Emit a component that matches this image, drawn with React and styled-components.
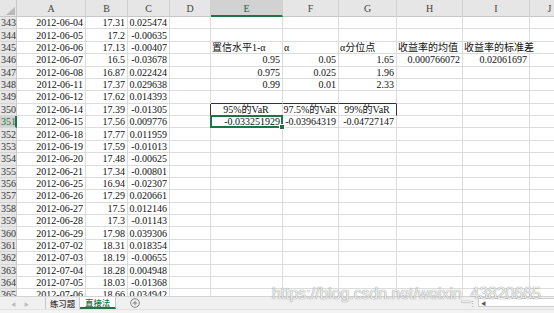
import React from "react";
import styled, { createGlobalStyle, css } from "styled-components";

const GREEN = "#217346";

const GlobalStyle = createGlobalStyle`
  html, body { margin: 0; padding: 0; background: #fff; }
  body { font-family: "Liberation Serif", "Noto Sans CJK SC", serif; }
`;

const Root = styled.div`
  position: relative;
  width: 554px;
  height: 313px;
  overflow: hidden;
  display: flex;
  flex-direction: column;
  background: #fff;
`;

const SheetArea = styled.div`
  flex: none;
  height: 296px;
  overflow: hidden;
`;

const Grid = styled.div`
  display: grid;
  grid-template-columns: 17px 69px 42px 42px 41px 72px 56px 58px 66px 67px 40px;
  grid-template-rows: 17px;
  grid-auto-rows: 12.38px;
  width: 570px;
`;

const Corner = styled.div`
  background: #e6e6e6;
  border-right: 1px solid #c8c8c8;
  border-bottom: 1px solid #c8c8c8;
  display: flex;
  align-items: flex-end;
  justify-content: flex-end;
  padding: 0 1px 1px 0;
  box-sizing: border-box;
`;

const ColHead = styled.div`
  box-sizing: border-box;
  background: ${(p) => (p.$sel ? "#d2d2d2" : "#e6e6e6")};
  border-right: 1px solid #cfcfcf;
  border-bottom: ${(p) => (p.$sel ? `2px solid ${GREEN}` : "1px solid #c8c8c8")};
  color: ${(p) => (p.$sel ? "#2b5d3f" : "#444")};
  font-size: 10px;
  display: flex;
  align-items: center;
  justify-content: center;
  padding-top: ${(p) => (p.$sel ? "1px" : "0")};
`;

const RowHead = styled.div`
  box-sizing: border-box;
  background: ${(p) => (p.$sel ? "#d2d2d2" : "#e6e6e6")};
  border-right: ${(p) => (p.$sel ? `2px solid ${GREEN}` : "1px solid #c8c8c8")};
  border-bottom: 1px solid #d6d6d6;
  color: ${(p) => (p.$sel ? GREEN : "#333")};
  font-size: 10px;
  line-height: 11px;
  display: flex;
  align-items: center;
  justify-content: flex-start;
  padding-left: 1px;
`;

const justify = { left: "flex-start", right: "flex-end", center: "center" };

const Cell = styled.div`
  position: relative;
  box-sizing: border-box;
  border-right: 1px solid ${(p) => (p.$dr ? "#333" : "#dcdcdc")};
  border-bottom: 1px solid ${(p) => (p.$db ? "#333" : "#dcdcdc")};
  color: #111;
  font-size: 10px;
  line-height: 11px;
  white-space: nowrap;
  display: flex;
  align-items: center;
  justify-content: ${(p) => justify[p.$align || "right"]};
  padding: 0 2px 0 1px;
  ${(p) =>
    p.$selected &&
    css`
      z-index: 2;
      &::after {
        content: "";
        position: absolute;
        left: -1px;
        top: -1px;
        right: -1px;
        bottom: -1px;
        border: 2px solid ${GREEN};
        pointer-events: none;
      }
      &::before {
        content: "";
        position: absolute;
        right: -3px;
        bottom: -3px;
        width: 4px;
        height: 4px;
        background: ${GREEN};
        border: 1px solid #fff;
        z-index: 3;
      }
    `}
`;

const TabBar = styled.div`
  flex: none;
  height: 13px;
  box-sizing: border-box;
  background: #f0f0f0;
  border-top: 1px solid #d4d4d4;
  display: flex;
  align-items: stretch;
  font-family: "Noto Sans CJK SC", "Liberation Sans", sans-serif;
`;

const NavArrows = styled.div`
  width: 46px;
  display: flex;
  align-items: center;
  gap: 8px;
  padding-left: 11px;
  box-sizing: border-box;
  color: #bdbdbd;
  font-size: 5px;
  line-height: 5px;
  border-right: 1px solid #c8c8c8;
`;

const Tab = styled.div`
  display: flex;
  align-items: center;
  justify-content: center;
  padding: 0 4px;
  font-size: 8.4px;
  line-height: 9px;
  box-sizing: border-box;
  color: ${(p) => (p.$active ? GREEN : "#333")};
  background: ${(p) => (p.$active ? "#fff" : "transparent")};
  border-right: 1px solid #c8c8c8;
  border-bottom: ${(p) => (p.$active ? `2px solid ${GREEN}` : "none")};
  font-weight: 500;
  min-width: ${(p) => (p.$active ? "36px" : "34px")};
`;

const AddBtn = styled.div`
  margin-left: 14px;
  display: flex;
  align-items: center;
`;

const Spacer = styled.div`
  flex: 1;
`;

const Splitter = styled.div`
  width: 10px;
  display: flex;
  align-items: center;
  justify-content: center;
  color: #999;
  font-size: 7px;
  line-height: 8px;
  margin-right: 1px;
`;

const ScrollTrack = styled.div`
  width: 76px;
  margin: 1px 0 2px;
  box-sizing: border-box;
  background: #fff;
  border: 1px solid #cfcfcf;
  border-right: none;
  display: flex;
  align-items: center;
  padding-left: 2px;
  color: #555;
  font-size: 5px;
  line-height: 5px;
`;

const StatusBar = styled.div`
  flex: 1;
  background: #f3f3f3;
  border-top: 1px solid #e2e2e2;
`;

const Watermark = styled.div`
  position: absolute;
  left: 272px;
  top: 285px;
  font-family: "Liberation Sans", Arial, sans-serif;
  font-size: 15.8px;
  white-space: nowrap;
  color: rgba(255, 255, 255, 0.85);
  text-shadow: 0 0 1px rgba(90, 90, 90, 0.55), 0 0 1px rgba(90, 90, 90, 0.55);
  pointer-events: none;
`;

const rows = [
  [343, "2012-06-04", "17.31", "0.025474"],
  [344, "2012-06-05", "17.2", "-0.00635"],
  [345, "2012-06-06", "17.13", "-0.00407"],
  [346, "2012-06-07", "16.5", "-0.03678"],
  [347, "2012-06-08", "16.87", "0.022424"],
  [348, "2012-06-11", "17.37", "0.029638"],
  [349, "2012-06-12", "17.62", "0.014393"],
  [350, "2012-06-14", "17.39", "-0.01305"],
  [351, "2012-06-15", "17.56", "0.009776"],
  [352, "2012-06-18", "17.77", "0.011959"],
  [353, "2012-06-19", "17.59", "-0.01013"],
  [354, "2012-06-20", "17.48", "-0.00625"],
  [355, "2012-06-21", "17.34", "-0.00801"],
  [356, "2012-06-25", "16.94", "-0.02307"],
  [357, "2012-06-26", "17.29", "0.020661"],
  [358, "2012-06-27", "17.5", "0.012146"],
  [359, "2012-06-28", "17.3", "-0.01143"],
  [360, "2012-06-29", "17.98", "0.039306"],
  [361, "2012-07-02", "18.31", "0.018354"],
  [362, "2012-07-03", "18.19", "-0.00655"],
  [363, "2012-07-04", "18.28", "0.004948"],
  [364, "2012-07-05", "18.03", "-0.01368"],
  [365, "2012-07-06", "18.66", "0.034942"],
];

const L = (t) => ({ t, a: "left" });
const C = (t) => ({ t, a: "center" });

const extra = {
  345: { E: L("置信水平1-α"), F: L("α"), G: L("α分位点"), H: L("收益率的均值"), I: L("收益率的标准差") },
  346: { E: "0.95", F: "0.05", G: "1.65", H: "0.000766072", I: "0.02061697" },
  347: { E: "0.975", F: "0.025", G: "1.96" },
  348: { E: "0.99", F: "0.01", G: "2.33" },
  349: { E: { t: "", db: true }, F: { t: "", db: true }, G: { t: "", db: true } },
  350: { D: { t: "", dr: true }, E: C("95%的VaR"), F: C("97.5%的VaR"), G: { t: "99%的VaR", a: "center", dr: true } },
  351: { E: { t: "-0.033251929", sel: true }, F: "-0.03964319", G: "-0.04727147" },
};

const cols = ["A", "B", "C", "D", "E", "F", "G", "H", "I", "J"];

function norm(v) {
  if (v == null) return { t: "" };
  if (typeof v === "string") return { t: v };
  return v;
}

export default function App() {
  return (
    <>
      <GlobalStyle />
      <Root>
        <SheetArea>
          <Grid>
            <Corner>
              <svg width="9" height="8" viewBox="0 0 9 8">
                <polygon points="9,0 9,8 0,8" fill="#b8b8b8" />
              </svg>
            </Corner>
            {cols.map((c) => (
              <ColHead key={c} $sel={c === "E"}>
                {c}
              </ColHead>
            ))}
            {rows.map(([n, a, b, c]) => {
              const ex = extra[n] || {};
              const vals = { A: { t: a }, B: { t: b }, C: { t: c } };
              return (
                <React.Fragment key={n}>
                  <RowHead $sel={n === 351}>{n}</RowHead>
                  {cols.map((col) => {
                    const v = vals[col] || norm(ex[col]);
                    return (
                      <Cell
                        key={col}
                        $align={v.a}
                        $dr={v.dr}
                        $db={v.db}
                        $selected={v.sel}
                      >
                        {v.t}
                      </Cell>
                    );
                  })}
                </React.Fragment>
              );
            })}
          </Grid>
        </SheetArea>
        <TabBar>
          <NavArrows>
            <span>◀</span>
            <span>▶</span>
          </NavArrows>
          <Tab>练习题</Tab>
          <Tab $active>直接法</Tab>
          <AddBtn>
            <svg width="10" height="10" viewBox="0 0 10 10">
              <circle cx="5" cy="5" r="4.3" fill="none" stroke="#777" strokeWidth="0.9" />
              <path d="M5 2.8 V7.2 M2.8 5 H7.2" stroke="#777" strokeWidth="0.9" />
            </svg>
          </AddBtn>
          <Spacer />
          <Splitter>⋮</Splitter>
          <ScrollTrack>◀</ScrollTrack>
        </TabBar>
        <StatusBar />
        <Watermark>https://blog.csdn.net/weixin_43820665</Watermark>
      </Root>
    </>
  );
}
